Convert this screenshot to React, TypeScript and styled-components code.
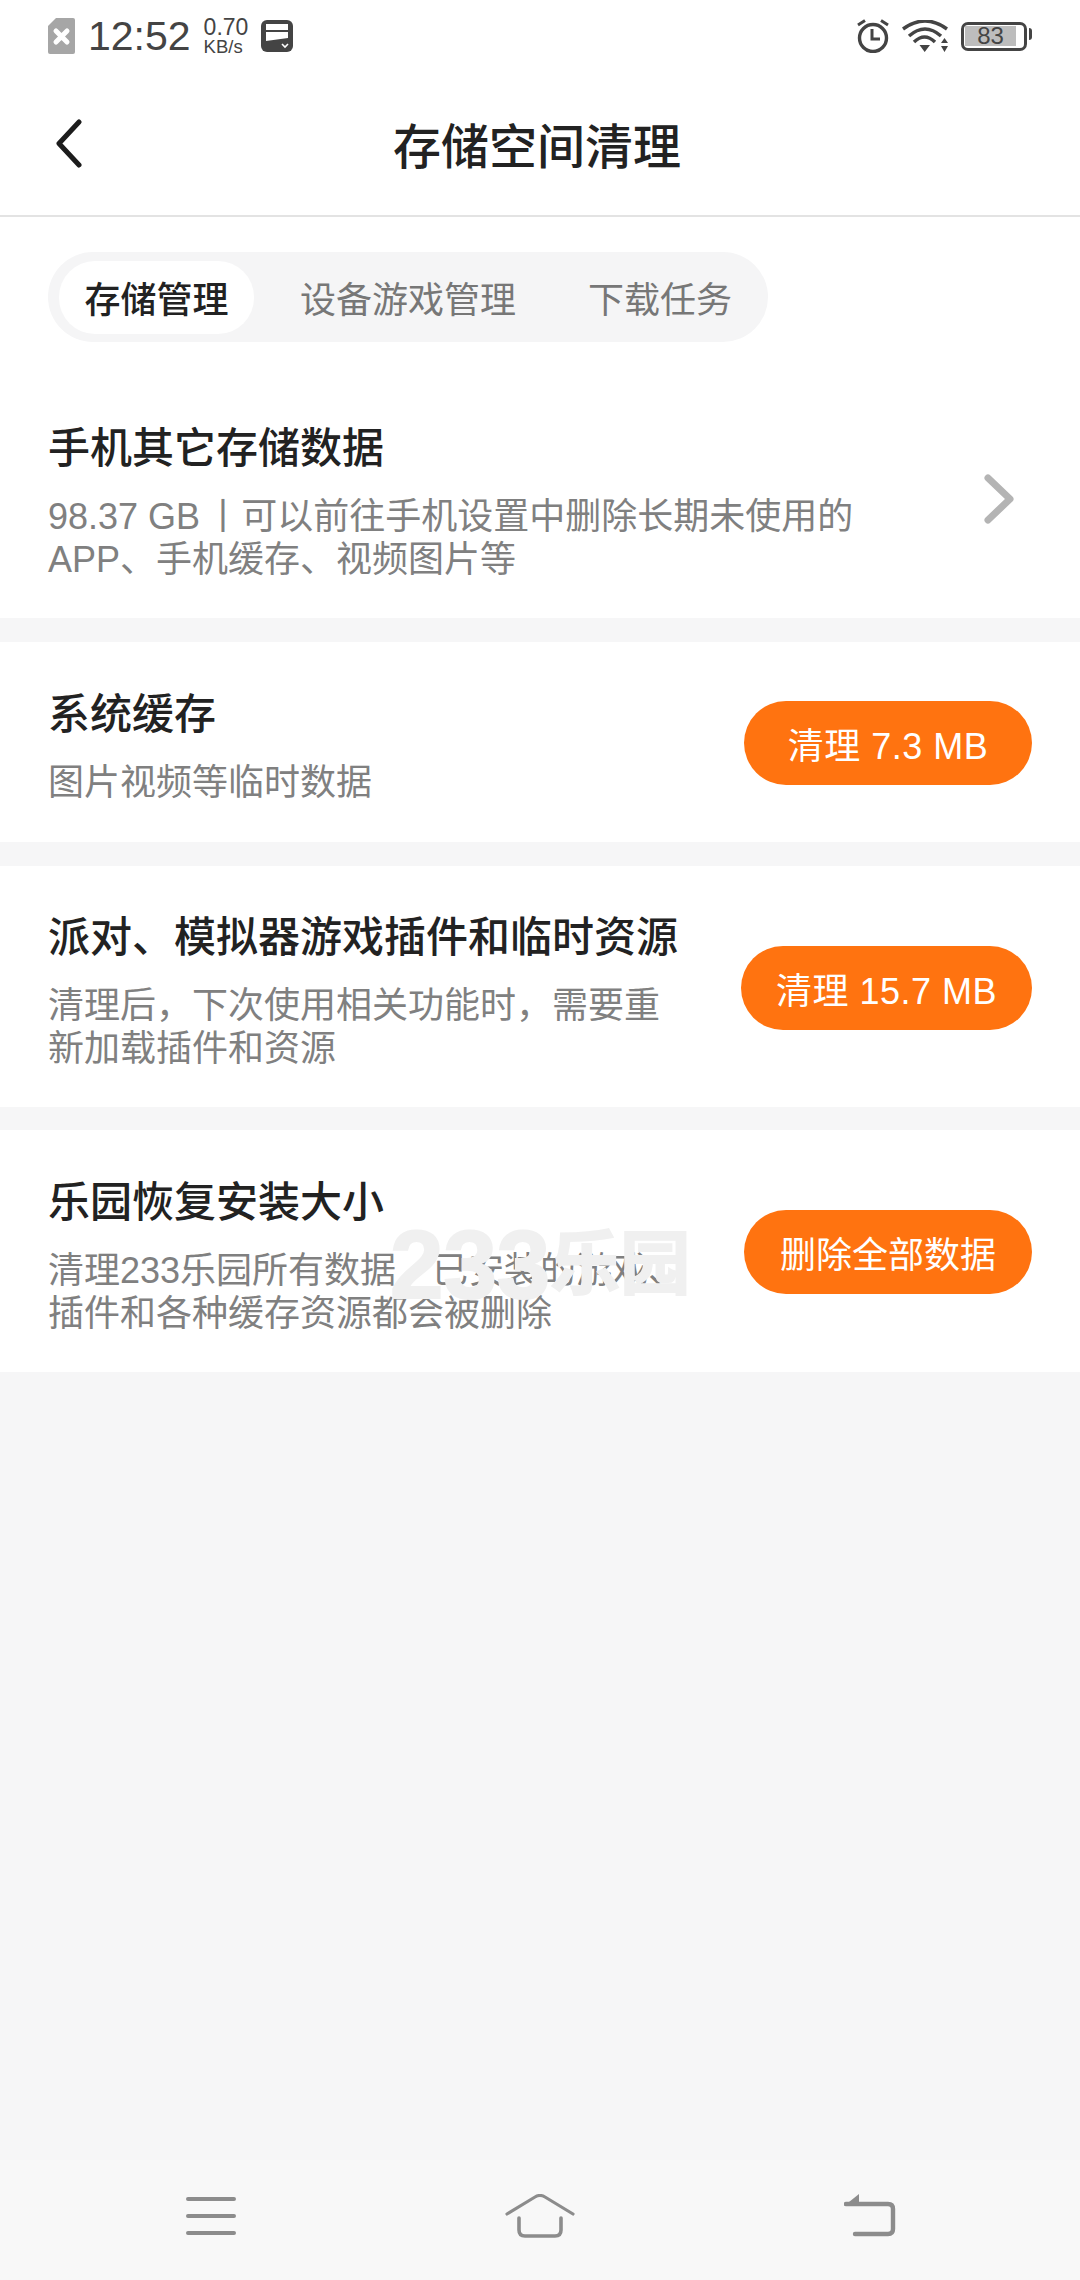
import React from "react"
import styled, { createGlobalStyle } from "styled-components"

const GlobalStyle = createGlobalStyle`
  html, body {
    margin: 0;
    padding: 0;
    background: #f6f6f7;
    font-family: "Liberation Sans", "Noto Sans CJK SC", sans-serif;
  }
`

const tabs = ["存储管理", "设备游戏管理", "下载任务"]

const App: React.FC = () => {
  return (
    <Page>
      <GlobalStyle />
      <StatusBar>
        <LeftStatus>
          <svg width="27" height="36" viewBox="0 0 27 36">
            <path d="M8 0H25a2 2 0 0 1 2 2V34a2 2 0 0 1-2 2H2a2 2 0 0 1-2-2V8z" fill="#a6a6a6" />
            <path d="M8 13l11 11M19 13L8 24" stroke="#fff" strokeWidth="5" strokeLinecap="round" />
          </svg>
          <Clock>12:52</Clock>
          <Speed>
            <span>0.70</span>
            <SpeedUnit>KB/s</SpeedUnit>
          </Speed>
          <svg width="32" height="32" viewBox="0 0 32 32">
            <rect width="32" height="32" rx="6" fill="#444" />
            <path d="M5 4H27V10H5zM5 12H27V18L5 21z" fill="#fff" />
            <path d="M21 24l3 3 3-3" stroke="#fff" strokeWidth="1.6" fill="none" />
          </svg>
        </LeftStatus>
        <RightStatus>
          <svg width="32" height="34" viewBox="0 0 32 34">
            <circle cx="16" cy="19" r="13.5" stroke="#444" strokeWidth="3.4" fill="none" />
            <path d="M15 10v10h8" stroke="#444" strokeWidth="3" fill="none" />
            <path d="M1 6l7-4.5M31 6l-7-4.5" stroke="#444" strokeWidth="3" />
          </svg>
          <svg width="46" height="33" viewBox="0 0 46 33">
            <path d="M1 9Q23-7 45 9M7 16Q23 2 39 16M12 22Q22.5 12 33 22" stroke="#444" strokeWidth="3.5" fill="none" />
            <path d="M17.5 25H28L22.7 32zM39 23h7l-3.5-5zM39 26h7l-3.5 6z" fill="#444" />
          </svg>
          <Battery>
            <BatteryLevel>83</BatteryLevel>
            <BatteryTip />
          </Battery>
        </RightStatus>
      </StatusBar>

      <TitleBar>
        <BackButton>
          <svg width="30" height="50" viewBox="0 0 30 50">
            <path d="M25 3L5 24.5l20 21.5" stroke="#1c1c1c" strokeWidth="5" strokeLinecap="round" strokeLinejoin="round" fill="none" />
          </svg>
        </BackButton>
        <Title>存储空间清理</Title>
      </TitleBar>

      <TabSection>
        <TabTrack>
          {tabs.map((tab, i) => (
            <Tab key={tab} $active={i === 0}>{tab}</Tab>
          ))}
        </TabTrack>
      </TabSection>

      <FirstRow>
        <RowText>
          <RowTitle>手机其它存储数据</RowTitle>
          <RowDesc>98.37 GB<Pipe>丨</Pipe>可以前往手机设置中删除长期未使用的<br />APP、手机缓存、视频图片等</RowDesc>
        </RowText>
        <Chevron width="30" height="50" viewBox="0 0 30 50">
          <path d="M4 4l22 21L4 46" stroke="#b4b4b4" strokeWidth="7" strokeLinecap="round" strokeLinejoin="round" fill="none" />
        </Chevron>
      </FirstRow>

      <Row>
        <RowText>
          <RowTitle>系统缓存</RowTitle>
          <RowDesc>图片视频等临时数据</RowDesc>
        </RowText>
        <CleanButton $width={288} $spaced>清理 7.3 MB</CleanButton>
      </Row>

      <Row>
        <RowText>
          <RowTitle>派对、模拟器游戏插件和临时资源</RowTitle>
          <RowDesc>清理后，下次使用相关功能时，需要重<br />新加载插件和资源</RowDesc>
        </RowText>
        <CleanButton $width={291} $spaced>清理 15.7 MB</CleanButton>
      </Row>

      <LastRow>
        <RowText>
          <RowTitle>乐园恢复安装大小</RowTitle>
          <RowDesc>清理233乐园所有数据，已安装的游戏、<br />插件和各种缓存资源都会被删除</RowDesc>
        </RowText>
        <Watermark>233<WatermarkCjk>乐园</WatermarkCjk></Watermark>
        <CleanButton $width={288}>删除全部数据</CleanButton>
      </LastRow>

      <Spacer />

      <NavBar>
        <svg width="50" height="38" viewBox="0 0 50 38">
          <path d="M2 2H48M2 19H48M2 36H48" stroke="#8c8c8c" strokeWidth="4" strokeLinecap="round" />
        </svg>
        <svg width="70" height="44" viewBox="0 0 70 44">
          <path d="M2 20L30 3q5-3 10 0L68 20" stroke="#8c8c8c" strokeWidth="3.2" strokeLinecap="round" fill="none" />
          <path d="M14 24V36q0 6 6 6H50q6 0 6-6V24" stroke="#8c8c8c" strokeWidth="3.6" strokeLinecap="round" fill="none" />
        </svg>
        <svg width="52" height="44" viewBox="0 0 52 44">
          <path d="M2 10H44q5 0 5 5V35q0 5-5 5H11" stroke="#8c8c8c" strokeWidth="4.4" strokeLinecap="round" fill="none" />
          <path d="M0 12L15 0V12z" fill="#8c8c8c" />
        </svg>
      </NavBar>
    </Page>
  )
}

export default App

const Page = styled.div`
  width: 1080px;
  height: 2280px;
  display: flex;
  flex-direction: column;
  background: #f6f6f7;
  overflow: hidden;
`

const StatusBar = styled.div`
  height: 72px;
  padding: 0 48px;
  box-sizing: border-box;
  display: flex;
  align-items: center;
  justify-content: space-between;
  background: #fff;
`

const LeftStatus = styled.div`
  display: flex;
  align-items: center;
  gap: 13px;
`

const RightStatus = styled.div`
  display: flex;
  align-items: center;
  gap: 13px;
`

const Clock = styled.span`
  font-size: 41px;
  color: #444;
`

const Speed = styled.div`
  display: flex;
  flex-direction: column;
  margin-top: 2px;
  font-size: 23px;
  line-height: 20px;
  color: #444;
`

const SpeedUnit = styled.span`
  font-size: 18.5px;
`

const Battery = styled.div`
  position: relative;
  width: 66px;
  height: 29px;
  box-sizing: border-box;
  border: 3px solid #444;
  border-radius: 7px;
  display: flex;
  align-items: center;
  padding-left: 1px;
  margin-right: 5px;
`

const BatteryLevel = styled.div`
  width: 51px;
  height: 20px;
  background: #bdbdbd;
  font-size: 24px;
  line-height: 20px;
  text-align: center;
  color: #444;
`

const BatteryTip = styled.div`
  position: absolute;
  right: -8px;
  top: 3px;
  width: 3px;
  height: 12px;
  border-radius: 0 3px 3px 0;
  background: #444;
`

const TitleBar = styled.div`
  position: relative;
  height: 145px;
  display: flex;
  align-items: center;
  justify-content: center;
  background: #fff;
  border-bottom: 2px solid #e3e3e3;
  box-sizing: border-box;
`

const BackButton = styled.div`
  position: absolute;
  left: 54px;
  top: 47px;
  display: flex;
`

const Title = styled.div`
  font-size: 48px;
  font-weight: 500;
  color: #222;
  margin: -2px 6px 0 0;
`

const TabSection = styled.div`
  padding: 35px 48px;
  background: #fff;
`

const TabTrack = styled.div`
  width: fit-content;
  height: 90px;
  padding-left: 11px;
  box-sizing: border-box;
  display: flex;
  align-items: center;
  background: #f5f5f6;
  border-radius: 45px;
`

const Tab = styled.div<{ $active: boolean }>`
  height: 73px;
  padding: 0 ${({ $active }) => ($active ? "25.5px" : "36px")};
  margin-right: ${({ $active }) => ($active ? "10px" : "0")};
  display: flex;
  align-items: center;
  border-radius: 36px;
  font-size: 36px;
  font-weight: ${({ $active }) => ($active ? 500 : 400)};
  color: ${({ $active }) => ($active ? "#222" : "#777")};
  background: ${({ $active }) => ($active ? "#fff" : "transparent")};
`

const Row = styled.div`
  position: relative;
  display: flex;
  align-items: center;
  justify-content: space-between;
  min-height: 200px;
  box-sizing: border-box;
  padding: 44px 48px 37px;
  margin-top: 24px;
  background: #fff;
`

const FirstRow = styled(Row)`
  margin-top: 0;
  padding-right: 66px;
`

const LastRow = styled(Row)`
  margin-top: 23px;
  min-height: 242px;
`

const RowText = styled.div`
  display: flex;
  flex-direction: column;
  gap: 18px;
`

const RowTitle = styled.div`
  font-size: 42px;
  line-height: 56px;
  font-weight: 500;
  color: #222;
`

const RowDesc = styled.div`
  font-size: 36px;
  line-height: 43px;
  color: #808080;
`

const Pipe = styled.span`
  margin-left: 5px;
`

const Chevron = styled.svg`
  margin-top: -4px;
`

const Watermark = styled.div`
  position: absolute;
  left: 390px;
  top: 90px;
  display: flex;
  align-items: center;
  font-size: 96px;
  line-height: 90px;
  font-weight: 700;
  color: #f0f0f0;
  -webkit-text-stroke: 2px #f0f0f0;
  pointer-events: none;
`

const WatermarkCjk = styled.span`
  font-size: 70px;
`

const CleanButton = styled.div<{ $width: number; $spaced?: boolean }>`
  width: ${({ $width }) => $width}px;
  height: 84px;
  margin-top: -5px;
  flex-shrink: 0;
  display: flex;
  align-items: center;
  justify-content: center;
  border-radius: 42px;
  background: #ff7310;
  color: #fff;
  font-size: 36px;
  letter-spacing: ${({ $spaced }) => ($spaced ? "0.5px" : "0")};
`

const Spacer = styled.div`
  flex: 1;
`

const NavBar = styled.div`
  height: 120px;
  padding: 0 184px 8px 186px;
  box-sizing: border-box;
  display: flex;
  align-items: center;
  justify-content: space-between;
  background: #f8f8f8;
`
